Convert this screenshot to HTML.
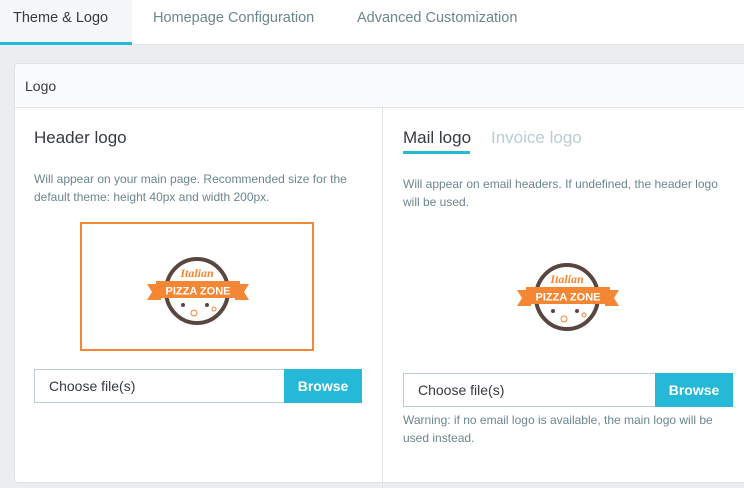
<!DOCTYPE html>
<html><head><meta charset="utf-8">
<style>
*{margin:0;padding:0;box-sizing:border-box}
body{width:744px;height:460px;overflow:hidden;background:#ebedef;font-family:"Liberation Sans","DejaVu Sans",sans-serif;position:relative;color:#363a41}
.abs{position:absolute}
.tabs{left:0;top:0;width:744px;height:45px;background:#fff;border-bottom:1px solid #dfe3e6}
.tab{top:0;height:45px;line-height:37px;font-size:14.5px;color:#6c868e}
.panel{left:14px;top:63px;width:740px;height:420px;background:#fff;border:1px solid #dfe3e6;border-radius:4px}
.ph{left:0;top:0;width:740px;height:44px;background:#fafbfc;border-bottom:1px solid #dfe3e6;border-radius:4px 4px 0 0}
.inp{height:34px;border:1px solid #bbcdd2;background:#fff;font-size:14px;color:#363a41;line-height:32px;padding-left:14px}
.btn{height:34px;background:#25b9d7;color:#fff;font-weight:bold;font-size:14px;line-height:34px;text-align:center}
.help{font-size:12px;color:#6c868e;line-height:18px}
</style></head><body>
<div class="abs tabs"></div>
<div class="abs" style="left:0;top:0;width:132px;height:45px;background:#f4f8fb"></div>
<div class="abs" style="left:0;top:42px;width:132px;height:3px;background:#25b9d7"></div>
<div class="abs tab" style="left:13px;color:#363a41">Theme &amp; Logo</div>
<div class="abs tab" style="left:153px">Homepage Configuration</div>
<div class="abs tab" style="left:357px">Advanced Customization</div>

<div class="abs panel">
 <div class="abs ph"></div>
 <div class="abs" style="left:10px;top:14px;font-size:14px;color:#363a41">Logo</div>
 <div class="abs" style="left:367px;top:44px;width:1px;height:380px;background:#dfe3e6"></div>
</div>

<div class="abs" style="left:34px;top:128px;font-size:17px;color:#363a41">Header logo</div>
<div class="abs help" style="left:34px;top:170px;width:330px">Will appear on your main page. Recommended size for the default theme: height 40px and width 200px.</div>
<div class="abs" style="left:80px;top:222px;width:234px;height:129px;border:2px solid #f58634;background:#fff"></div>

<div class="abs" style="left:403px;top:128px;font-size:17px;color:#363a41">Mail logo</div>
<div class="abs" style="left:403px;top:151px;width:67px;height:3px;background:#25b9d7"></div>
<div class="abs" style="left:491px;top:128px;font-size:17px;color:#bbcdd2">Invoice logo</div>
<div class="abs help" style="left:403px;top:175px;width:330px">Will appear on email headers. If undefined, the header logo will be used.</div>

<svg class="abs" style="left:147px;top:255px" width="102" height="72" viewBox="0 0 102 72">
 <ellipse cx="50" cy="36" rx="31" ry="32" fill="none" stroke="#5a4640" stroke-width="4"/>
 <text x="50" y="22" font-size="12" font-style="italic" font-weight="bold" fill="#f58634" text-anchor="middle" font-family="Liberation Serif,serif">Italian</text>
 <polygon points="0,29 14,29 14,45 0,45 5,37" fill="#f58634"/>
 <polygon points="102,29 88,29 88,45 102,45 97,37" fill="#f58634"/>
 <rect x="9" y="26" width="84" height="17" fill="#f58634"/>
 <text x="51" y="39.5" font-size="11" font-weight="bold" fill="#fff" text-anchor="middle">PIZZA ZONE</text>
 <circle cx="47" cy="58" r="3" fill="none" stroke="#f58634"/><circle cx="60" cy="50" r="2" fill="#5a4640"/><circle cx="36" cy="50" r="2" fill="#5a4640"/><circle cx="67" cy="54" r="2" fill="none" stroke="#f58634"/>
</svg>
<svg class="abs" style="left:517px;top:261px" width="102" height="72" viewBox="0 0 102 72">
 <ellipse cx="50" cy="36" rx="31" ry="32" fill="none" stroke="#5a4640" stroke-width="4"/>
 <text x="50" y="22" font-size="12" font-style="italic" font-weight="bold" fill="#f58634" text-anchor="middle" font-family="Liberation Serif,serif">Italian</text>
 <polygon points="0,29 14,29 14,45 0,45 5,37" fill="#f58634"/>
 <polygon points="102,29 88,29 88,45 102,45 97,37" fill="#f58634"/>
 <rect x="9" y="26" width="84" height="17" fill="#f58634"/>
 <text x="51" y="39.5" font-size="11" font-weight="bold" fill="#fff" text-anchor="middle">PIZZA ZONE</text>
 <circle cx="47" cy="58" r="3" fill="none" stroke="#f58634"/><circle cx="60" cy="50" r="2" fill="#5a4640"/><circle cx="36" cy="50" r="2" fill="#5a4640"/><circle cx="67" cy="54" r="2" fill="none" stroke="#f58634"/>
</svg>

<div class="abs inp" style="left:34px;top:369px;width:252px">Choose file(s)</div>
<div class="abs btn" style="left:284px;top:369px;width:78px">Browse</div>
<div class="abs inp" style="left:403px;top:373px;width:254px">Choose file(s)</div>
<div class="abs btn" style="left:655px;top:373px;width:78px">Browse</div>
<div class="abs help" style="left:403px;top:411px;width:332px">Warning: if no email logo is available, the main logo will be used instead.</div>
</body></html>
